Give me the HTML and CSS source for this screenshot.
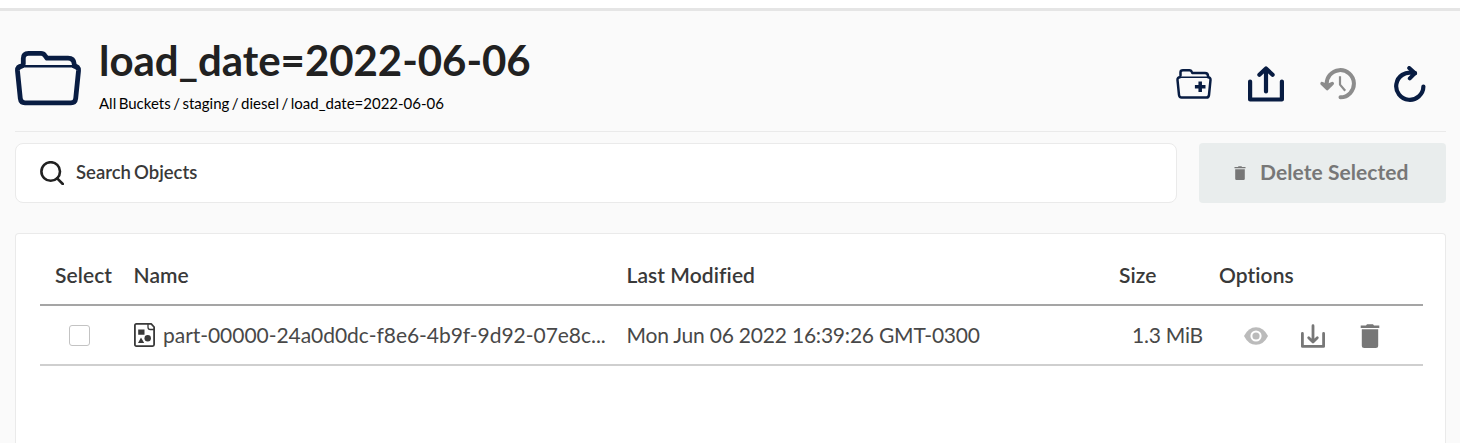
FILE: index.html
```html
<!DOCTYPE html>
<html lang="en">
<head>
<meta charset="utf-8">
<title>Object Browser</title>
<link rel="stylesheet" href="styles.css">
</head>
<body>
<div class="topbar"></div>
<main class="page">
  <header class="header">
    <svg class="bucket-icon" viewBox="0 0 66 56" fill="none" stroke="currentColor" stroke-linejoin="round" stroke-linecap="round">
      <path stroke-width="4.8" d="M8.3 14V8.5Q8.3 3.4 13.5 3.4H26Q28.5 3.4 30 5.6L32 8.2H53Q58.8 8.2 59.2 14"/>
      <path stroke-width="2.6" d="M7 16.3H59"/>
      <path stroke-width="4.8" d="M7 16Q2.2 16.5 2.5 21L5.3 48.5Q5.8 52.8 10 52.8H56Q60.2 52.8 60.7 48.5L63.5 21Q63.8 16.5 59 16"/>
    </svg>
    <div class="heading">
      <h1 class="title">load_date=2022-06-06</h1>
      <nav class="crumbs">All Buckets / staging / diesel / load_date=2022-06-06</nav>
    </div>
    <div class="actions">
      <svg class="action" viewBox="0 0 36 36" fill="none" stroke="currentColor" stroke-linejoin="round" stroke-linecap="round">
        <path stroke-width="2.5" d="M4.5 9.5V6.2Q4.5 4.2 7 4.2H13.5Q15 4.2 15.6 5.5L16.3 6.9H29Q32 6.9 32 10"/>
        <path stroke-width="1.5" d="M4 11.2H32"/>
        <path stroke-width="2.5" d="M4 11.2Q1.3 11.4 1.5 14L3 29Q3.3 31.5 5.5 31.5H30.5Q32.7 31.5 33 29L34.5 14Q34.7 11.4 32 11.2"/>
        <path stroke-width="3.5" stroke-linecap="butt" d="M24.2 15.4V26M18.9 20.7H29.5"/>
      </svg>
      <svg class="action" viewBox="0 0 36 36" fill="none" stroke="currentColor" stroke-width="4.2" stroke-linejoin="round" stroke-linecap="round">
        <path d="M2.1 15.5V33.5H33.9V15.5M18 25.5V2.8M11.4 8.8L18 2.5L24.6 8.8"/>
      </svg>
      <svg class="action action-disabled" viewBox="0 0 36 36" fill="none" stroke="currentColor" stroke-linejoin="round" stroke-linecap="round">
        <path stroke-width="4" d="M6.8 19.3A13.6 13.6 0 1 1 20.5 31.3"/>
        <path fill="currentColor" stroke-width="3.4" d="M2 17.5L7.2 22.6L12.3 17.5L7.3 19.5Z"/>
        <path stroke-width="2.2" stroke-linecap="butt" d="M20 10.3V18.6L25.2 24.7"/>
      </svg>
      <svg class="action" viewBox="0 0 36 36" fill="none" stroke="currentColor" stroke-width="4.2" stroke-linejoin="round" stroke-linecap="round">
        <path d="M31.4 20.5A13.6 13.6 0 1 1 21 7L23 7.2"/>
        <path stroke-width="4" d="M17.2 2L23 7.2L17.8 12.4"/>
      </svg>
    </div>
  </header>

  <div class="toolbar">
    <div class="search">
      <svg class="search-icon" viewBox="0 0 24 24" fill="none" stroke="currentColor" stroke-width="2.6" stroke-linecap="round">
        <circle cx="10.7" cy="10.5" r="9.3"/><path d="M17.2 17.3L22.8 23"/>
      </svg>
      <span class="search-text">Search Objects</span>
    </div>
    <button class="delete" disabled>
      <svg class="delete-icon" viewBox="0 0 12 14" fill="currentColor">
        <path d="M.5 1H4L4.5 .2H7.5L8 1H11.5V2.2H.5ZM1.2 3.2H10.8V12.8Q10.8 14 9.6 14H2.4Q1.2 14 1.2 12.8Z"/>
      </svg>
      <span class="delete-text">Delete Selected</span>
    </button>
  </div>

  <section class="panel">
    <div class="row row-head">
      <span class="cell-select">Select</span>
      <span class="h-name">Name</span>
      <span class="h-date">Last Modified</span>
      <span class="h-size">Size</span>
      <span class="h-options">Options</span>
    </div>
    <div class="row row-item">
      <span class="cell-check"><span class="checkbox"></span></span>
      <span class="cell-name">
        <svg class="file-icon" viewBox="0 0 21 24" fill="currentColor">
          <path fill="none" stroke="currentColor" stroke-width="1.8" stroke-linejoin="round" d="M2.4 .9H17.2L20.1 4V21.6Q20.1 23.1 18.6 23.1H2.4Q.9 23.1 .9 21.6V2.4Q.9 .9 2.4 .9Z"/>
          <path fill="none" stroke="currentColor" stroke-width="1.3" d="M14 1V4.2Q14 6.5 16.3 6.5H20"/>
          <path d="M4.2 6.5H10.5V11.8H4.2ZM4 20L7 14.6L10.2 20Z"/><circle cx="13.7" cy="15.2" r="3.2"/>
        </svg>
        <span class="name-text">part-00000-24a0d0dc-f8e6-4b9f-9d92-07e8c...</span>
      </span>
      <span class="date-text">Mon Jun 06 2022 16:39:26 GMT-0300</span>
      <span class="size-text">1.3 MiB</span>
      <span class="options">
        <svg class="option option-disabled" viewBox="0 0 24 24">
          <path fill="currentColor" d="M0 12Q4.4 3.2 12 3.2T24 12Q19.6 20.8 12 20.8T0 12Z"/>
          <circle cx="12" cy="12" r="4.6" fill="currentColor" stroke="#fff" stroke-width="2"/>
        </svg>
        <svg class="option" viewBox="0 0 24 24" fill="none" stroke="currentColor" stroke-linejoin="round" stroke-linecap="round">
          <path stroke-width="2.8" d="M1.4 9.5V22.4H22.6V9.5M12 1.7V17.5M7.7 13.8L12 18L16.3 13.8"/>
        </svg>
        <svg class="option" viewBox="0 0 24 24" fill="currentColor">
          <path d="M2.7 1.5H8L9 .2H15L16 1.5H21.3V4H2.7ZM3.8 5.3H20.2V21.5Q20.2 24 17.7 24H6.3Q3.8 24 3.8 21.5Z"/>
        </svg>
      </span>
    </div>
  </section>
</main>
</body>
</html>
```

FILE: styles.css
```css
* { box-sizing: border-box; }
body {
  margin: 0;
  background: #fafafa;
  font-family: Lato, "Liberation Sans", sans-serif;
}
svg { display: block; flex: none; }
.topbar { height: 11px; background: #fff; border-bottom: 3px solid #e5e5e5; }
.page { padding: 0 14px 0 15px; }
.header {
  display: flex;
  height: 121px;
  border-bottom: 1px solid #eaeaea;
  color: #081c42;
}
.bucket-icon { width: 66px; height: 56px; margin-top: 39px; }
.heading { margin-left: 18px; padding-top: 23px; white-space: nowrap; }
.title {
  margin: 0;
  font-size: 42px;
  line-height: 52px;
  font-weight: 700;
  letter-spacing: -0.05px;
  color: #212121;
}
.crumbs {
  margin-top: 7px;
  font-size: 15px;
  line-height: 20px;
  word-spacing: -1.35px;
  color: #000;
}
.actions { display: flex; gap: 36px; margin: 55px 18px 0 auto; }
.action { width: 36px; height: 36px; }
.action-disabled { color: #8c8c8c; }
.toolbar { display: flex; gap: 22px; margin-top: 11px; height: 60px; }
.search {
  display: flex;
  align-items: center;
  width: 1162px;
  padding-left: 24px;
  background: #fff;
  border: 1px solid #eaeaea;
  border-radius: 8px;
  color: #212121;
}
.search-icon { width: 24px; height: 24px; }
.search-text {
  margin-left: 12px;
  padding-bottom: 2px;
  font-size: 18.5px;
  font-weight: 600;
  word-spacing: -1.5px;
  color: #393939;
}
.delete {
  display: flex;
  align-items: center;
  flex: 1;
  padding: 0 0 0 35px;
  border: 0;
  border-radius: 4px;
  background: #e9eded;
  color: #777;
  font-family: inherit;
}
.delete-icon { width: 12px; height: 14px; }
.delete-text {
  margin-left: 14px;
  padding-bottom: 3px;
  font-size: 21px;
  font-weight: 700;
  letter-spacing: 0.07px;
  white-space: nowrap;
}
.panel {
  height: 210px;
  margin-top: 30px;
  padding: 11px 22px 0 24px;
  background: #fff;
  border: 1px solid #eaeaea;
  border-bottom: 0;
  border-radius: 4px 4px 0 0;
}
.row {
  display: grid;
  grid-template-columns: 93.5px 493px 452.5px 140px 204px;
  align-items: center;
  color: #393939;
  font-size: 21px;
  white-space: nowrap;
}
.row-head { height: 61px; font-weight: 600; border-bottom: 2px solid #a5a5a5; letter-spacing: 0.08px; }
.row-item { height: 60px; border-bottom: 2px solid #cfcfcf; }
.cell-select { padding-left: 15px; }
.h-size { padding-left: 40px; }
.cell-check { padding-left: 29px; }
.checkbox {
  display: block;
  width: 21px;
  height: 21px;
  border: 1px solid #c3c3c3;
  border-radius: 3px;
  background: #fff;
}
.cell-name { display: flex; align-items: center; }
.file-icon { width: 21px; height: 24px; }
.name-text { margin-left: 8.5px; letter-spacing: -0.04px; }
.name-text, .date-text, .size-text { padding-bottom: 2px; color: #484848; }
.date-text { letter-spacing: -0.21px; }
.size-text { padding-right: 16px; text-align: right; letter-spacing: -0.2px; }
.options { display: flex; gap: 33px; padding: 1px 0 0 25px; color: #777; }
.option { width: 24px; height: 24px; }
.option-disabled { color: #bbb; }
```
